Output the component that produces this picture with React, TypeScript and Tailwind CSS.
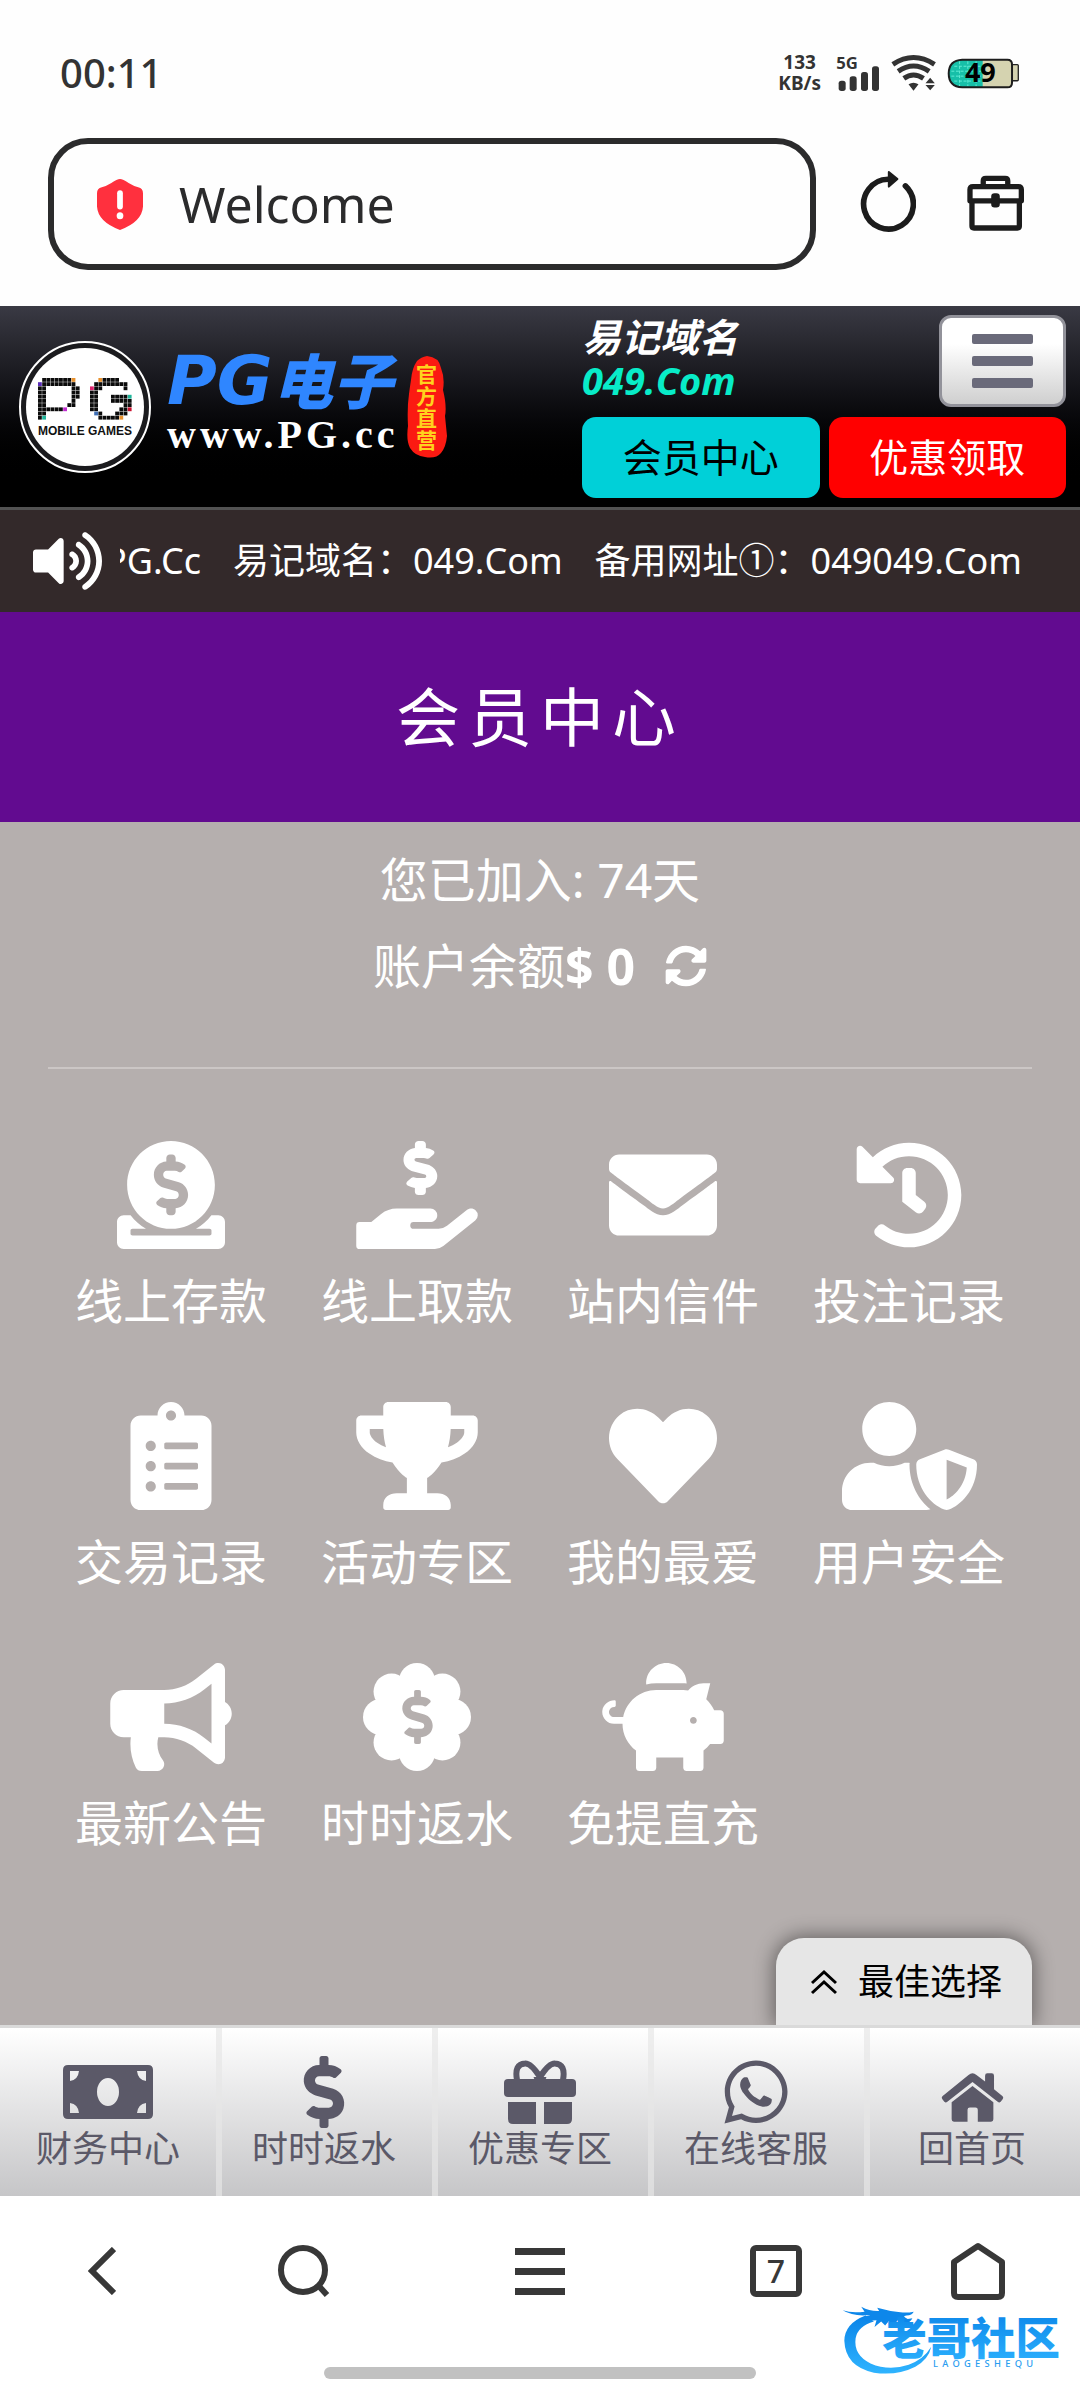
import { useState, type ReactNode } from 'react';
import {
  FaBullhorn,
  FaClipboardList,
  FaDollarSign,
  FaDonate,
  FaEnvelope,
  FaHandHoldingUsd,
  FaHeart,
  FaHistory,
  FaPiggyBank,
  FaSyncAlt,
  FaTrophy,
  FaUserShield,
  FaVolumeUp,
  FaWhatsapp,
} from 'react-icons/fa';

const P_ROWS = [
  '.xxxxxxxo.',
  'vxxxxxxxx.',
  'xx......xx',
  'xx......xx',
  'xx......xx',
  'xx......x.',
  'xx.....xx.',
  'xxxxxxm...',
  'xx........',
  'xt........',
];

const G_ROWS = [
  '..oxxxx...',
  '.xxxxxxxx.',
  'pxx.....x.',
  'xx........',
  'xx...xxxxt',
  'xx...xxxxx',
  'xx......xx',
  'xx.....xxr',
  '.bx...xxx.',
  '..xxxxxo..',
];

const PIXEL_COLORS: Record<string, string> = {
  x: '#0b0b0b',
  o: '#e8912d',
  v: '#5a2db8',
  m: '#c02ccf',
  t: '#1fb59a',
  p: '#e0246e',
  r: '#c8102e',
  b: '#3f6fb5',
};

function Pixels({ rows, x, y }: { rows: string[]; x: number; y: number }) {
  return (
    <g>
      {rows.flatMap((row, r) =>
        row.split('').map((c, i) =>
          c === '.' ? null : (
            <rect
              key={`${r}-${i}`}
              x={x + i * 4.2}
              y={y + r * 4.2}
              width={3.8}
              height={3.8}
              fill={PIXEL_COLORS[c]}
            />
          )
        )
      )}
    </g>
  );
}

function LogoMark() {
  return (
    <svg viewBox="0 0 132 132" className="size-[132px] shrink-0" role="img" aria-label="PG">
      <circle cx="66" cy="66" r="65" fill="#1b1b1e" stroke="#fff" strokeWidth="2" />
      <circle cx="66" cy="66" r="59" fill="#fff" />
      <Pixels rows={P_ROWS} x={19} y={37} />
      <Pixels rows={G_ROWS} x={71} y={37} />
      <text
        x="66"
        y="94"
        textAnchor="middle"
        fontFamily="Liberation Sans, sans-serif"
        fontWeight="700"
        fontSize="12"
        fill="#111"
      >
        MOBILE GAMES
      </text>
    </svg>
  );
}

function StatusBar() {
  return (
    <div className="flex h-[138px] items-center justify-between pt-2 pr-[60px] pl-[60px] text-[#333]">
      <span className="text-[40px] font-medium">00:11</span>
      <div className="flex items-center gap-[11px]">
        <div className="mr-1 text-center text-[19px] leading-[21px] font-bold">
          133
          <br />
          KB/s
        </div>
        <svg viewBox="238 72 132 114" className="h-[38px] w-[44px] overflow-visible" fill="#333">
          <text x="239" y="116" fontSize="50" fontWeight="700">5G</text>
          <rect x="246" y="152" width="21" height="31" rx="8" />
          <rect x="279" y="139" width="21" height="44" rx="8" />
          <rect x="313" y="126" width="21" height="57" rx="8" />
          <rect x="346" y="109" width="21" height="74" rx="8" />
        </svg>
        <svg viewBox="400 72 134 114" className="h-[38px] w-[45px]" fill="none" stroke="#333" strokeWidth="15">
          <path d="M405 103Q467 62 530 103M421 124Q467 92 514 124M438 145Q467 125 497 145" />
          <path d="M452 163Q467 154 482 163L467 182ZM503 160L517 143L531 160ZM503 165L517 181L531 165Z" fill="#333" stroke="none" />
        </svg>
        <svg viewBox="563 80 219 94" className="h-[31px] w-[73px] overflow-visible">
          <rect x="755" y="100" width="23" height="49" rx="3" fill="#d5d3b0" stroke="#222" strokeWidth="4" />
          <path d="M608 85H745Q759 85 759 99V155Q759 169 745 169H608Q567 167 567 127Q567 87 608 85Z" fill="#d5d3b0" />
          <path d="M608 85H670V169H608Q567 167 567 127Q567 87 608 85Z" fill="#17bfa8" />
          <path d="M584 105H665M575 120H665M575 135H665M584 150H665M600 90V165M625 90V165M650 90V165" stroke="#62ecd6" strokeWidth="3" strokeDasharray="9 5" />
          <path d="M608 85H745Q759 85 759 99V155Q759 169 745 169H608Q567 167 567 127Q567 87 608 85Z" fill="none" stroke="#1d1d1d" strokeWidth="6" />
          <text x="663" y="154" textAnchor="middle" fontSize="82" fontWeight="700" fill="#000">49</text>
        </svg>
      </div>
    </div>
  );
}

function AddressBar() {
  return (
    <div className="flex h-[168px] items-start pr-[56px] pl-12">
      <button className="flex h-[132px] flex-1 items-center rounded-[40px] border-[6px] border-[#2b2b2c] pl-[43px] text-[#2b2b2c]">
        <svg viewBox="0 0 48 50" preserveAspectRatio="none" className="h-[51px] w-[46px]">
          <path d="M24 0Q27 0 33 4Q38 7 43 8Q48 9 48 14V27Q47 42 24 50Q1 42 0 27V14Q0 9 5 8Q10 7 15 4Q21 0 24 0Z" fill="#ff303e" />
          <path d="M24 14V27" stroke="#fff" strokeWidth="6" strokeLinecap="round" />
          <circle cx="24" cy="36" r="3.5" fill="#fff" />
        </svg>
        <span className="ml-9 text-[50px]">Welcome</span>
      </button>
      <button aria-label="刷新" className="mt-[32px] ml-[43px]">
        <svg viewBox="298 424 172 188" className="h-[63px] w-[57px]" fill="none" stroke="#1c1c1c" strokeWidth="17">
          <path d="M386 451A75 75 0 1 0 438 471" strokeLinecap="round" />
          <path d="M388 429L414 450L388 473Z" fill="#1c1c1c" strokeWidth="6" strokeLinejoin="round" />
        </svg>
      </button>
      <button aria-label="工具箱" className="mt-[37px] ml-[51px]">
        <svg viewBox="622 436 172 168" className="size-[57px]" fill="none" stroke="#1c1c1c" strokeWidth="16" strokeLinejoin="round">
          <path d="M671 466V452Q671 444 679 444H737Q745 444 745 452V466" />
          <path d="M631 512V478Q631 469 640 469H777Q786 469 786 478V512Z" />
          <path d="M637 512V588Q637 594 643 594H774Q780 594 780 588V512" />
          <rect x="703" y="497" width="10" height="27" rx="2" />
        </svg>
      </button>
    </div>
  );
}

function SiteHeader() {
  return (
    <header className="flex items-center justify-between border-b-[3px] border-[#525252] bg-linear-to-b from-[#3a3a44] to-black to-90% pt-[9px] pr-[14px] pb-[9px] pl-[19px]">
      <a href="#home" className="flex items-center gap-4 text-white">
        <LogoMark />
        <span className="block">
          <span className="flex h-[56px] items-center font-black text-[#2f86ff] italic">
            <span className="font-['DejaVu_Sans',sans-serif] text-[68px] leading-[56px]">PG</span>
            <span className="text-[60px] leading-[56px]">电子</span>
          </span>
          <span className="block font-['Liberation_Serif',serif] text-[40px] leading-[52px] font-bold tracking-widest">
            www.PG.cc
          </span>
        </span>
        <span className="relative -ml-2 flex h-[102px] w-[40px] items-center justify-center">
          <svg viewBox="0 0 40 102" className="absolute inset-0 size-full">
            <path d="M20 0Q32 1 34 12Q38 22 36 34Q40 50 38 60L40 80Q39 91 34 97Q29 103 18 101Q8 100 3 92Q-1 84 1 70Q0 52 2 38Q3 30 4 24Q5 12 10 5Q14 1 20 0Z" fill="#fb1a12" />
          </svg>
          <span className="relative w-[22px] text-center text-[21px] leading-[22px] font-bold text-[#ffd21e]">
            官方直营
          </span>
        </span>
      </a>
      <div className="flex w-[484px] flex-col gap-[10px]">
        <div className="flex h-[92px] justify-between">
          <div className="text-[39px] leading-[43px] font-bold text-white italic">
            易记域名
            <br />
            <span className="text-[38px] text-[#08ecc8]">049.Com</span>
          </div>
          <button
            aria-label="菜单"
            className="flex w-[127px] flex-col items-center justify-center gap-3 rounded-xl border-[3px] border-[#92929a] bg-linear-to-b from-white from-30% to-[#cfcfcf]"
          >
            <span className="h-[10px] w-[61px] rounded-[2px] bg-[#6a6a7a]" />
            <span className="h-[10px] w-[61px] rounded-[2px] bg-[#6a6a7a]" />
            <span className="h-[10px] w-[61px] rounded-[2px] bg-[#6a6a7a]" />
          </button>
        </div>
        <div className="grid h-[81px] grid-cols-2 gap-[9px] text-[39px]">
          <button className="rounded-[14px] bg-[#00d0d8] text-black">会员中心</button>
          <button className="rounded-[14px] bg-[#ff0000] text-white">优惠领取</button>
        </div>
      </div>
    </header>
  );
}

function Notice() {
  return (
    <div className="flex h-[102px] items-center bg-[#33292a] pr-[58px] pl-[33px] text-white">
      <FaVolumeUp className="h-[62px] w-[69px] shrink-0" />
      <div className="ml-[18px] flex min-w-0 flex-1 justify-end gap-8 overflow-hidden text-[36px] whitespace-nowrap">
        <span>PG.Cc</span>
        <span>易记域名：049.Com</span>
        <span>备用网址①：049049.Com</span>
      </div>
    </div>
  );
}

// Scalloped badge: eight lobes around a disc, with the dollar cut out
function BadgeDollar() {
  return (
    <span className="relative flex size-[108px] items-center justify-center">
      <svg viewBox="-54 -54 108 108" className="absolute inset-0 size-full" fill="currentColor">
        <circle r="38" />
        {[0, 45, 90, 135, 180, 225, 270, 315].map((a) => (
          <circle key={a} cx="0" cy="-36" r="18" transform={`rotate(${a})`} />
        ))}
      </svg>
      <FaDollarSign className="relative h-[54px] w-[31px] text-[#b5afae]" />
    </span>
  );
}

const menuItems: { label: string; icon: ReactNode }[] = [
  { label: '线上存款', icon: <FaDonate className="size-[108px]" /> },
  { label: '线上取款', icon: <FaHandHoldingUsd className="h-[108px] w-[122px]" /> },
  { label: '站内信件', icon: <FaEnvelope className="size-[108px]" /> },
  { label: '投注记录', icon: <FaHistory className="size-[108px]" /> },
  { label: '交易记录', icon: <FaClipboardList className="size-[108px]" /> },
  { label: '活动专区', icon: <FaTrophy className="h-[108px] w-[122px]" /> },
  { label: '我的最爱', icon: <FaHeart className="size-[108px]" /> },
  { label: '用户安全', icon: <FaUserShield className="h-[108px] w-[135px]" /> },
  { label: '最新公告', icon: <FaBullhorn className="h-[108px] w-[122px]" /> },
  { label: '时时返水', icon: <BadgeDollar /> },
  { label: '免提直充', icon: <FaPiggyBank className="h-[108px] w-[122px]" /> },
];

function MoneyIcon() {
  return (
    <svg viewBox="0 0 90 54" className="h-[54px] w-[90px]">
      <path
        fillRule="evenodd"
        fill="currentColor"
        d="M5 0H85Q90 0 90 5V49Q90 54 85 54H5Q0 54 0 49V5Q0 0 5 0ZM7 6V16Q15 15 16 6ZM74 6Q75 15 83 16V6ZM7 38V48H16Q15 39 7 38ZM83 38Q75 39 74 48H83ZM45 13A11 14 0 0 0 45 41A11 14 0 0 0 45 13Z"
      />
    </svg>
  );
}

function GiftIcon() {
  return (
    <svg viewBox="0 0 72 64" className="h-[64px] w-[72px]" fill="currentColor">
      <path d="M13 20Q10 4 21 3.500Q27 3 36 17Q45 3 51 3.500Q62 4 59 20M36 17L31 20M36 17L41 20" fill="none" stroke="currentColor" strokeWidth="6" />
      <rect y="19" width="72" height="18" rx="4" />
      <path d="M4 42H32V64H9Q4 64 4 59ZM40 42H68V59Q68 64 63 64H40Z" />
    </svg>
  );
}

function HouseIcon() {
  return (
    <svg viewBox="722 516 188 148" className="mt-[10px] h-[49px] w-[63px]" fill="currentColor">
      <path d="M816 517Q822 517 828 522L854 542V524Q854 517 861 517H874Q881 517 881 524V565L907 586Q911 590 907 595L901 603Q897 607 892 603L816 543L740 603Q735 607 731 603L725 595Q721 590 725 586L804 522Q810 517 816 517Z" />
      <path d="M816 555L879 604V656Q879 663 872 663H832V627Q832 620 825 620H808Q801 620 801 627V663H760Q753 663 753 656V604Z" />
    </svg>
  );
}

const navItems: { label: string; icon: ReactNode }[] = [
  { label: '财务中心', icon: <MoneyIcon /> },
  { label: '时时返水', icon: <FaDollarSign className="size-[72px]" /> },
  { label: '优惠专区', icon: <GiftIcon /> },
  { label: '在线客服', icon: <FaWhatsapp className="size-[72px]" /> },
  { label: '回首页', icon: <HouseIcon /> },
];

function BottomNav() {
  return (
    <nav className="relative grid grid-cols-5 border-t-[3px] border-[#dadada] bg-linear-to-b from-white to-[#c6c6c8] text-[#5b5968]">
      {navItems.map((item, i) => (
        <a
          key={item.label}
          href="#nav"
          className={
            i > 0
              ? 'flex h-[168px] flex-col items-center pt-6 shadow-[inset_6px_0_0_#e6e6e6b0]'
              : 'flex h-[168px] flex-col items-center pt-6'
          }
        >
          <span className="flex h-[80px] items-center">{item.icon}</span>
          <span className="text-[36px] leading-[34px]">{item.label}</span>
        </a>
      ))}
    </nav>
  );
}

function BrowserBar() {
  return (
    <footer className="relative h-[204px] bg-white pt-[43px]">
      <div className="grid h-[64px] grid-cols-[204fr_200fr_272fr_200fr_204fr] place-items-center text-[#383838]">
        <button aria-label="后退">
          <svg viewBox="0 0 28 48" className="h-12 w-7" fill="none" stroke="currentColor" strokeWidth="6">
            <path d="M26 2L4 24L26 46" />
          </svg>
        </button>
        <button aria-label="搜索">
          <svg viewBox="0 0 52 52" className="size-[52px]" fill="none" stroke="currentColor" strokeWidth="6">
            <ellipse cx="25" cy="25" rx="22" ry="22" />
            <path d="M39 39L49 50" />
          </svg>
        </button>
        <button aria-label="菜单" className="flex flex-col gap-[13px]">
          <span className="h-[7px] w-[50px] bg-current" />
          <span className="h-[7px] w-[50px] bg-current" />
          <span className="h-[7px] w-[50px] bg-current" />
        </button>
        <button className="flex size-[52px] items-center justify-center rounded-md border-[6px] border-current text-[32px] leading-none font-medium">
          7
        </button>
        <button aria-label="主页">
          <svg viewBox="0 0 54 58" className="h-[58px] w-[54px]" fill="none" stroke="currentColor" strokeWidth="6" strokeLinejoin="round">
            <path d="M27 4L51 20V51Q51 55 47 55H7Q3 55 3 51V20Z" />
          </svg>
        </button>
      </div>
      <div className="mx-auto mt-[64px] h-3 w-2/5 rounded-full bg-[#c1c1c1]" />
      <svg viewBox="60 66 680 220" className="absolute right-[13px] bottom-[24px] h-[73px] w-[227px]">
        <defs>
          <linearGradient id="wave" x1="0" y1="0" x2="0" y2="1">
            <stop offset="0" stopColor="#0a84e8" />
            <stop offset="1" stopColor="#2fb4ff" />
          </linearGradient>
        </defs>
        <path d="M135 104Q72 128 71 180Q74 258 160 276Q230 286 285 258Q325 236 333 198Q310 236 265 252Q205 272 150 248Q98 222 105 172Q112 136 160 122Z" fill="url(#wave)" />
        <path d="M66 88Q95 98 132 92L122 77Q150 92 176 90L170 80Q205 90 240 94Q262 96 280 92Q276 102 258 104Q242 106 262 114L276 112Q268 130 248 127L232 118L222 130L204 122L194 134L182 122L162 138L168 118L138 120L128 108L150 102Q98 108 66 88Z" fill="#0d87ea" />
        <text x="185" y="223" fontSize="134" fontWeight="900" fill="url(#wave)">老哥社区</text>
        <text x="338" y="260" fontSize="28" fontWeight="500" letterSpacing="13" fill="#2a9df0">LAOGESHEQU</text>
      </svg>
    </footer>
  );
}

export default function App() {
  const [balance, setBalance] = useState(0);

  return (
    <div className="flex min-h-screen flex-col bg-[#fefefe] font-['Noto_Sans','Noto_Sans_CJK_SC',sans-serif]">
      <StatusBar />
      <AddressBar />
      <SiteHeader />
      <Notice />
      <h1 className="bg-[#620b90] text-center text-[64px] leading-[210px] tracking-[8px] text-white">
        会员中心
      </h1>
      <main className="flex flex-1 flex-col bg-[#b5afae] px-12 text-white">
        <div className="border-b-2 border-[#cbc6c5] pt-[15px] pb-[58px] text-center text-[48px] leading-[86px]">
          <p>您已加入: 74天</p>
          <p className="flex items-center justify-center">
            账户余额<b className="text-[50px]">$ {balance}</b>
            <button aria-label="刷新余额" onClick={() => setBalance(0)} className="ml-[30px]">
              <FaSyncAlt className="size-[42px]" />
            </button>
          </p>
        </div>
        <div className="grid grid-cols-4 gap-y-[65px] pt-[72px] pb-[70px]">
          {menuItems.map((item) => (
            <a key={item.label} href="#menu" className="flex flex-col items-center gap-4">
              {item.icon}
              <span className="text-[48px] leading-[72px]">{item.label}</span>
            </a>
          ))}
        </div>
        <button className="mt-auto flex h-[87px] w-[256px] items-center self-end rounded-t-[28px] bg-[#e6e6e6] pl-[34px] text-[36px] text-black shadow-[0_0_20px_2px_rgba(0,0,0,0.45)]">
          <svg viewBox="0 0 28 26" className="mr-[20px] h-[26px] w-7" fill="none" stroke="currentColor" strokeWidth="3">
            <path d="M2 14L14 3L26 14M2 24L14 13L26 24" />
          </svg>
          最佳选择
        </button>
      </main>
      <BottomNav />
      <BrowserBar />
    </div>
  );
}
